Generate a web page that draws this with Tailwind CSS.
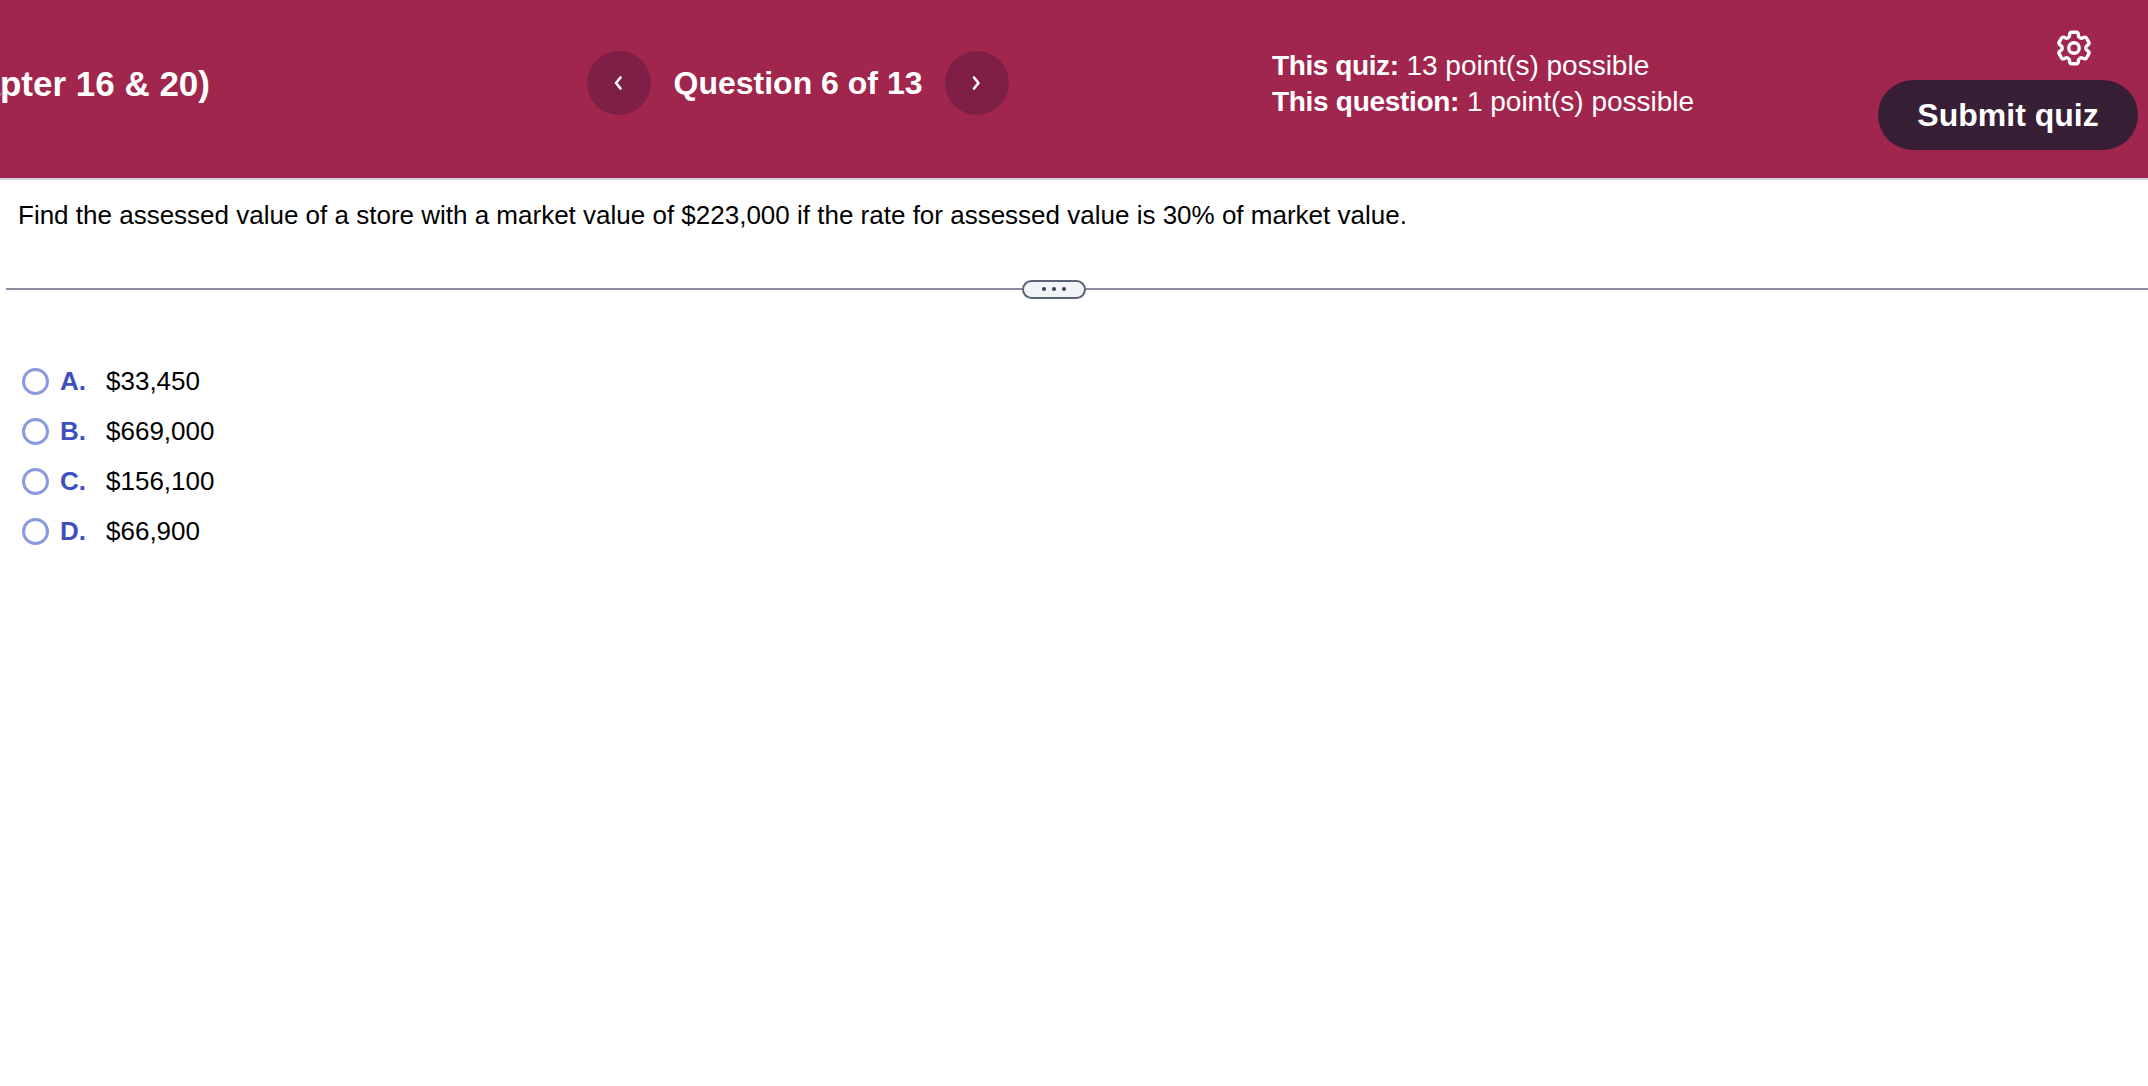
<!DOCTYPE html>
<html lang="en">
<head>
    <meta charset="UTF-8">
    <title>Question 6 of 13</title>
    <script src="https://cdn.jsdelivr.net/npm/@tailwindcss/browser@4"></script>
</head>
<body class="bg-white font-['Liberation_Sans',Arial,sans-serif] text-black overflow-hidden h-[1086px]">

    <!-- Quiz header -->
    <header class="h-[180px] bg-[#a0264d] border-b-2 border-[#cdd0da] flex text-white">
        <div class="w-[210px] shrink-0 overflow-hidden flex justify-end items-center pb-[10px]">
            <h1 class="whitespace-nowrap text-[35px] font-bold">Chapter 16 &amp; 20)</h1>
        </div>

        <div class="ml-[377px] w-[422px] shrink-0 flex items-center justify-between pb-[12px]">
            <button class="w-[64px] h-[64px] rounded-full bg-[#7f1f45] flex items-center justify-center">
                <svg class="w-[16px] h-[18px]" viewBox="0 0 16 18" fill="none" stroke="white" stroke-width="2.600" stroke-linecap="round" stroke-linejoin="round"><path d="M9.500 3.500 5 9l4.500 5.500"/></svg>
            </button>
            <span class="text-[32px] font-bold whitespace-nowrap">Question 6 of 13</span>
            <button class="w-[64px] h-[64px] rounded-full bg-[#7f1f45] flex items-center justify-center">
                <svg class="w-[16px] h-[18px]" viewBox="0 0 16 18" fill="none" stroke="white" stroke-width="2.600" stroke-linecap="round" stroke-linejoin="round"><path d="M5 3.500 9.500 9 5 14.500"/></svg>
            </button>
        </div>

        <div class="ml-[263px] w-[500px] shrink-0 flex flex-col justify-center pb-[10px] text-[28px] leading-[36px]">
            <p><b class="tracking-[-0.4px]">This quiz:</b> 13 point(s) possible</p>
            <p><b class="tracking-[-0.3px]">This question:</b> 1 point(s) possible</p>
        </div>

        <div class="ml-[106px] w-[260px] shrink-0 flex flex-col items-center pt-[27px]">
            <svg class="ml-[132px] w-[42px] h-[42px]" viewBox="0 0 24 24" fill="none" stroke="white" stroke-width="1.900" stroke-linecap="round" stroke-linejoin="round">
                <path d="M9.594 3.940c.09-.542.56-.94 1.110-.94h2.593c.55 0 1.020.398 1.110.94l.213 1.281c.063.374.313.686.645.87.074.04.147.083.22.127.325.196.72.257 1.075.124l1.217-.456a1.125 1.125 0 0 1 1.370.49l1.296 2.247a1.125 1.125 0 0 1-.26 1.431l-1.003.827c-.293.241-.438.613-.43.992a7.723 7.723 0 0 1 0 .255c-.008.378.137.75.43.991l1.004.827c.424.35.534.955.26 1.430l-1.298 2.247a1.125 1.125 0 0 1-1.369.491l-1.217-.456c-.355-.133-.75-.072-1.076.124a6.470 6.470 0 0 1-.22.128c-.331.183-.581.495-.644.869l-.213 1.281c-.09.543-.56.94-1.110.94h-2.594c-.55 0-1.019-.398-1.110-.94l-.213-1.281c-.062-.374-.312-.686-.644-.87a6.520 6.520 0 0 1-.22-.127c-.325-.196-.72-.257-1.076-.124l-1.217.456a1.125 1.125 0 0 1-1.369-.49l-1.297-2.247a1.125 1.125 0 0 1 .26-1.431l1.004-.827c.292-.24.437-.613.43-.991a6.932 6.932 0 0 1 0-.255c.007-.38-.138-.751-.43-.992l-1.004-.827a1.125 1.125 0 0 1-.26-1.430l1.297-2.247a1.125 1.125 0 0 1 1.370-.491l1.216.456c.356.133.751.072 1.076-.124.072-.044.146-.086.22-.128.332-.183.582-.495.644-.869l.214-1.280Z"/>
                <circle cx="12" cy="12" r="3"/>
            </svg>
            <button class="mt-[11px] w-[260px] h-[70px] rounded-full bg-[#371f35] text-[32px] font-bold whitespace-nowrap">Submit quiz</button>
        </div>
    </header>

    <!-- Question -->
    <p class="pl-[18px] pt-[19px] text-[26px] leading-[32px] h-[99px] whitespace-nowrap">Find the assessed value of a store with a market value of $223,000 if the rate for assessed value is 30% of market value.</p>

    <!-- Pane divider -->
    <div class="ml-[6px] flex items-center h-[20px]">
        <div class="h-[2px] bg-[#8a8d9f] w-[1016px]"></div>
        <div class="w-[64px] h-[19px] shrink-0 rounded-full border-2 border-[#5b6474] bg-[#f1f3f6] flex items-center justify-center gap-[6px]">
            <span class="w-[4px] h-[4px] rounded-full bg-[#374151]"></span>
            <span class="w-[4px] h-[4px] rounded-full bg-[#374151]"></span>
            <span class="w-[4px] h-[4px] rounded-full bg-[#374151]"></span>
        </div>
        <div class="h-[2px] bg-[#8a8d9f] flex-1"></div>
    </div>

    <!-- Answer choices -->
    <ul class="mt-[57px] pl-[22px] text-[26px] flex flex-col">
        <li class="h-[50px] flex items-center">
            <span class="w-[27px] h-[27px] rounded-full border-[3px] border-[#8a9ade] bg-white shrink-0"></span>
            <b class="ml-[11px] w-[46px] text-[#3d50bd]">A.</b><span>$33,450</span>
        </li>
        <li class="h-[50px] flex items-center">
            <span class="w-[27px] h-[27px] rounded-full border-[3px] border-[#8a9ade] bg-white shrink-0"></span>
            <b class="ml-[11px] w-[46px] text-[#3d50bd]">B.</b><span>$669,000</span>
        </li>
        <li class="h-[50px] flex items-center">
            <span class="w-[27px] h-[27px] rounded-full border-[3px] border-[#8a9ade] bg-white shrink-0"></span>
            <b class="ml-[11px] w-[46px] text-[#3d50bd]">C.</b><span>$156,100</span>
        </li>
        <li class="h-[50px] flex items-center">
            <span class="w-[27px] h-[27px] rounded-full border-[3px] border-[#8a9ade] bg-white shrink-0"></span>
            <b class="ml-[11px] w-[46px] text-[#3d50bd]">D.</b><span>$66,900</span>
        </li>
    </ul>

</body>
</html>
